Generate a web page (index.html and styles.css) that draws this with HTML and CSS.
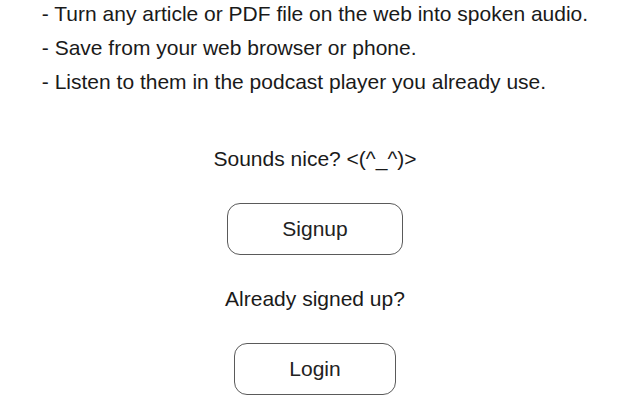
FILE: index.html
```html
<!DOCTYPE html>
<html lang="en">
<head>
<meta charset="utf-8">
<title>Listen later</title>
<link rel="stylesheet" href="styles.css">
</head>
<body>
<main class="page">
  <ul class="features">
    <li>- Turn any article or PDF file on the web into spoken audio.</li>
    <li>- Save from your web browser or phone.</li>
    <li>- Listen to them in the podcast player you already use.</li>
  </ul>
  <section class="cta">
    <p class="prompt">Sounds nice? &lt;(^_^)&gt;</p>
    <a class="btn" href="#signup">Signup</a>
    <p class="prompt">Already signed up?</p>
    <a class="btn" href="#login">Login</a>
  </section>
</main>
</body>
</html>
```

FILE: styles.css
```css
html, body {
  margin: 0;
  padding: 0;
  background: #fff;
}

body {
  font-family: "Liberation Sans", Arial, sans-serif;
  font-size: 21px;
  line-height: 24px;
  color: #1a1a1a;
  overflow: hidden;
}

.page {
  width: 630px;
  display: flex;
  flex-direction: column;
  align-items: center;
  padding-top: 2px;
}

.features {
  list-style: none;
  margin: 0;
  padding: 0;
  display: flex;
  flex-direction: column;
  gap: 10px;
}

.cta {
  margin-top: 53px;
  display: flex;
  flex-direction: column;
  align-items: center;
  gap: 32px;
}

.prompt {
  margin: 0;
}

.btn {
  box-sizing: border-box;
  height: 52px;
  padding: 0 54px;
  display: flex;
  align-items: center;
  justify-content: center;
  border: 1px solid #5a5a5a;
  border-radius: 13px;
  color: #222;
  text-decoration: none;
}
```
